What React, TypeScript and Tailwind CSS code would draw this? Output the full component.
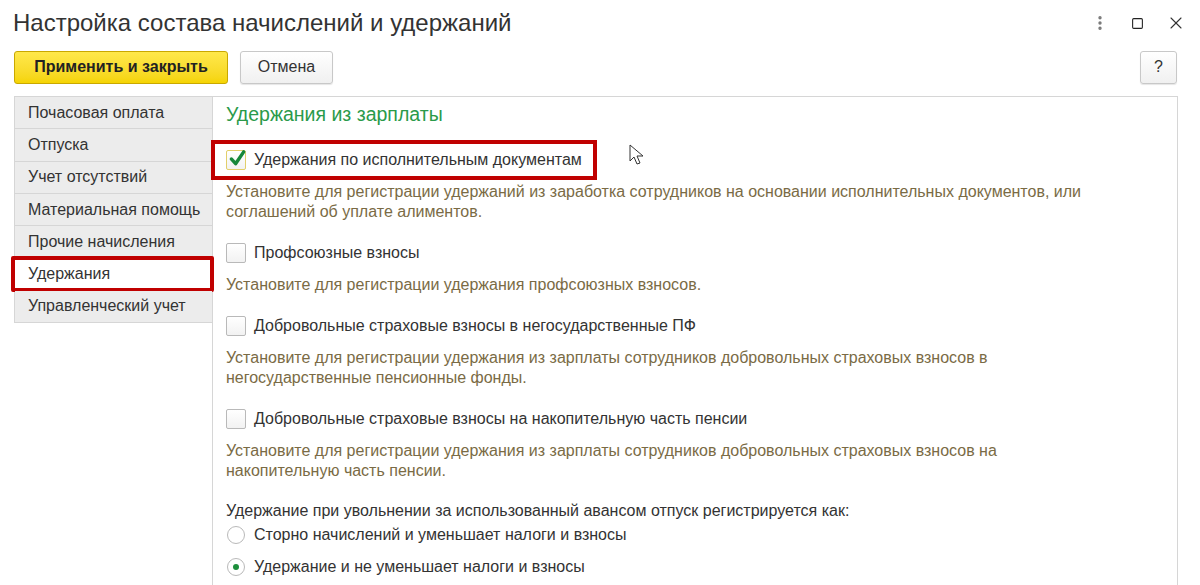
import { X, Square, MoreVertical } from "lucide-react";

const navItems = [
  "Почасовая оплата",
  "Отпуска",
  "Учет отсутствий",
  "Материальная помощь",
  "Прочие начисления",
  "Удержания",
  "Управленческий учет",
];

const CheckBox = ({ checked }: { checked?: boolean }) => (
  <span
    className={`relative inline-block w-[20px] h-[20px] rounded-[2px] border shrink-0 bg-gradient-to-b from-white to-[#f2f2f2] ${
      checked ? "border-[#e2cf6a]" : "border-[#b9b9b9]"
    }`}
  >
    {checked && (
      <svg viewBox="0 0 20 20" className="absolute left-[1px] top-[-2px] w-[19px] h-[19px]">
        <path d="M3.5 10.5 L8 15.5 L16.5 3" fill="none" stroke="#16883a" strokeWidth="3.6" strokeLinecap="round" strokeLinejoin="round" />
      </svg>
    )}
  </span>
);

const Radio = ({ checked }: { checked?: boolean }) => (
  <span className="inline-flex items-center justify-center w-[18px] h-[18px] rounded-full border border-[#b9b9b9] bg-white shrink-0">
    {checked && <span className="w-[6px] h-[6px] rounded-full bg-[#1d8f3c]" />}
  </span>
);

const Option = ({
  label,
  desc,
  checked,
  marked,
}: {
  label: string;
  desc: string[];
  checked?: boolean;
  marked?: boolean;
}) => (
  <div className="flex flex-col">
    <div className="relative flex items-center gap-[8px] h-[24px] w-fit">
      {marked && (
        <span className="absolute left-[-15px] top-[-8px] w-[386px] h-[40px] border-[4px] border-[#c00000] pointer-events-none" />
      )}
      <CheckBox checked={checked} />
      <span className="text-[16px] text-[#333]">{label}</span>
    </div>
    <div className="mt-[10px] text-[16px] leading-[20px] text-[#7a6b45]">
      {desc.map((d) => (
        <div key={d}>{d}</div>
      ))}
    </div>
  </div>
);

export default function App() {
  return (
    <div className="relative w-[1200px] h-[585px] overflow-hidden bg-white text-[#333] font-['Liberation_Sans',Arial,sans-serif]">
      {/* заголовок */}
      <div className="flex items-center h-[46px] pl-[13px] pr-[14px]">
        <h1 className="text-[24px] text-[#333] flex-1">Настройка состава начислений и удержаний</h1>
        <div className="flex items-center gap-[22px] text-[#444]">
          <MoreVertical size={18} strokeWidth={2.5} className="text-[#777]" />
          <Square size={13} strokeWidth={2} className="text-[#222]" />
          <X size={20} strokeWidth={1.3} className="text-[#333]" />
        </div>
      </div>

      {/* кнопки */}
      <div className="flex items-center h-[34px] mt-[4px] px-[14px] pr-[23px]">
        <button className="h-[33px] w-[214px] rounded-[3px] border border-[#c9a800] bg-gradient-to-b from-[#ffe84a] to-[#f5d400] text-[16px] font-bold text-[#222]">
          Применить и закрыть
        </button>
        <button className="ml-[12px] h-[33px] w-[93px] rounded-[3px] border border-[#c8c8c8] bg-gradient-to-b from-white to-[#f0f0f0] text-[16px] text-[#333] shadow-[0_1px_1px_rgba(0,0,0,0.1)]">
          Отмена
        </button>
        <div className="flex-1" />
        <button className="h-[33px] w-[37px] rounded-[3px] border border-[#c8c8c8] bg-gradient-to-b from-white to-[#f0f0f0] text-[16px] text-[#333] shadow-[0_1px_1px_rgba(0,0,0,0.1)]">
          ?
        </button>
      </div>

      {/* панель */}
      <div className="flex mt-[12px] ml-[14px] w-[1164px] h-[500px]">
        <div className="w-[198px] shrink-0">
          <div className="border-l border-t border-[#d6d6d6]">
            {navItems.map((item) => {
              const active = item === "Удержания";
              return (
                <div
                  key={item}
                  className={`relative h-[32.3px] flex items-center pl-[13px] text-[16px] border-b border-[#d6d6d6] ${
                    active ? "bg-white" : "bg-[#ececec]"
                  }`}
                >
                  {active && (
                    <span className="absolute left-[-4px] top-[-2px] w-[203px] h-[36px] border-[4px] border-[#c00000] rounded-[2px] pointer-events-none" />
                  )}
                  {item}
                </div>
              );
            })}
          </div>
        </div>

        <div className="flex-1 border-l border-t border-r border-[#d6d6d6] pl-[13px] pt-[5px]">
          <div className="text-[19.5px] text-[#2a9a4a] h-[26px] flex items-center">Удержания из зарплаты</div>

          <div className="mt-[20px] flex flex-col gap-[19px]">
            <Option
              checked
              marked
              label="Удержания по исполнительным документам"
              desc={[
                "Установите для регистрации удержаний из заработка сотрудников на основании исполнительных документов, или",
                "соглашений об уплате алиментов.",
              ]}
            />
            <Option
              label="Профсоюзные взносы"
              desc={["Установите для регистрации удержания профсоюзных взносов."]}
            />
            <Option
              label="Добровольные страховые взносы в негосударственные ПФ"
              desc={[
                "Установите для регистрации удержания из зарплаты сотрудников добровольных страховых взносов в",
                "негосударственные пенсионные фонды.",
              ]}
            />
            <Option
              label="Добровольные страховые взносы на накопительную часть пенсии"
              desc={[
                "Установите для регистрации удержания из зарплаты сотрудников добровольных страховых взносов на",
                "накопительную часть пенсии.",
              ]}
            />
          </div>

          <div className="mt-[20px] text-[16px] leading-[20px]">
            Удержание при увольнении за использованный авансом отпуск регистрируется как:
          </div>
          <div className="flex items-center gap-[9px] h-[24px] mt-[2px] pl-[1px]">
            <Radio />
            <span className="text-[16px]">Сторно начислений и уменьшает налоги и взносы</span>
          </div>
          <div className="flex items-center gap-[9px] h-[24px] mt-[8px] pl-[1px]">
            <Radio checked />
            <span className="text-[16px]">Удержание и не уменьшает налоги и взносы</span>
          </div>
        </div>
      </div>

      {/* курсор */}
      <svg className="absolute left-[629px] top-[144px] w-[16px] h-[24px]" viewBox="0 0 16 24">
        <path d="M1 1 L1 17 L5 13 L8 20 L11 19 L8 12 L14 12 Z" fill="white" stroke="#333" strokeWidth="1" strokeLinejoin="round" />
      </svg>
    </div>
  );
}
